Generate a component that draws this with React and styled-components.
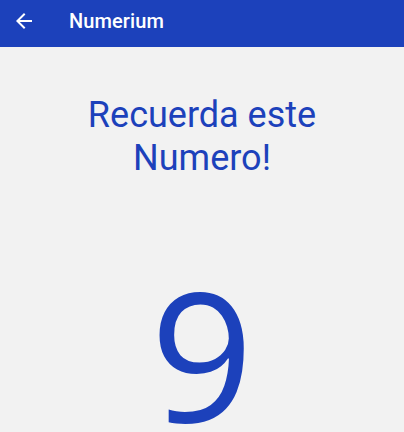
import React from 'react';
import styled, { createGlobalStyle } from 'styled-components';

const GlobalStyle = createGlobalStyle`
  html, body {
    margin: 0;
    padding: 0;
    background: #f2f2f2;
    font-family: Roboto, "Liberation Sans", sans-serif;
  }
`;

const Screen = styled.div`
  width: 404px;
  height: 432px;
  overflow: hidden;
  display: flex;
  flex-direction: column;
  background: #f2f2f2;
`;

const AppBar = styled.header`
  height: 47px;
  flex-shrink: 0;
  box-sizing: border-box;
  background: #1c41bb;
  display: flex;
  align-items: center;
  padding: 0 0 6px 12px;
  gap: 33px;
  color: #ffffff;
`;

const BackButton = styled.button`
  border: none;
  background: none;
  padding: 0;
  width: 24px;
  height: 24px;
  display: flex;
  align-items: center;
  justify-content: center;
  color: inherit;
`;

const Title = styled.h1`
  margin: 0;
  font-size: 20px;
  font-weight: 500;
  letter-spacing: 0.1px;
`;

const Content = styled.main`
  display: flex;
  flex-direction: column;
  align-items: center;
`;

const Prompt = styled.h2`
  margin: 47px 0 0;
  font-size: 36px;
  font-weight: 400;
  line-height: 43px;
  color: #1c41bb;
  text-align: center;
`;

const Digit = styled.div`
  margin-top: 83px;
  font-family: "Open Sans", "Noto Sans", sans-serif;
  font-size: 180px;
  line-height: 1;
  color: #1c41bb;
`;

const ArrowLeft = () => (
  <svg width="24" height="24" viewBox="0 0 24 24" fill="currentColor">
    <path d="M20 11H7.83l5.59-5.59L12 4l-8 8 8 8 1.41-1.41L7.83 13H20v-2z" />
  </svg>
);

export default function App() {
  return (
    <>
      <GlobalStyle />
      <Screen>
        <AppBar>
          <BackButton aria-label="back">
            <ArrowLeft />
          </BackButton>
          <Title>Numerium</Title>
        </AppBar>
        <Content>
          <Prompt>
            Recuerda este
            <br />
            Numero!
          </Prompt>
          <Digit>9</Digit>
        </Content>
      </Screen>
    </>
  );
}
